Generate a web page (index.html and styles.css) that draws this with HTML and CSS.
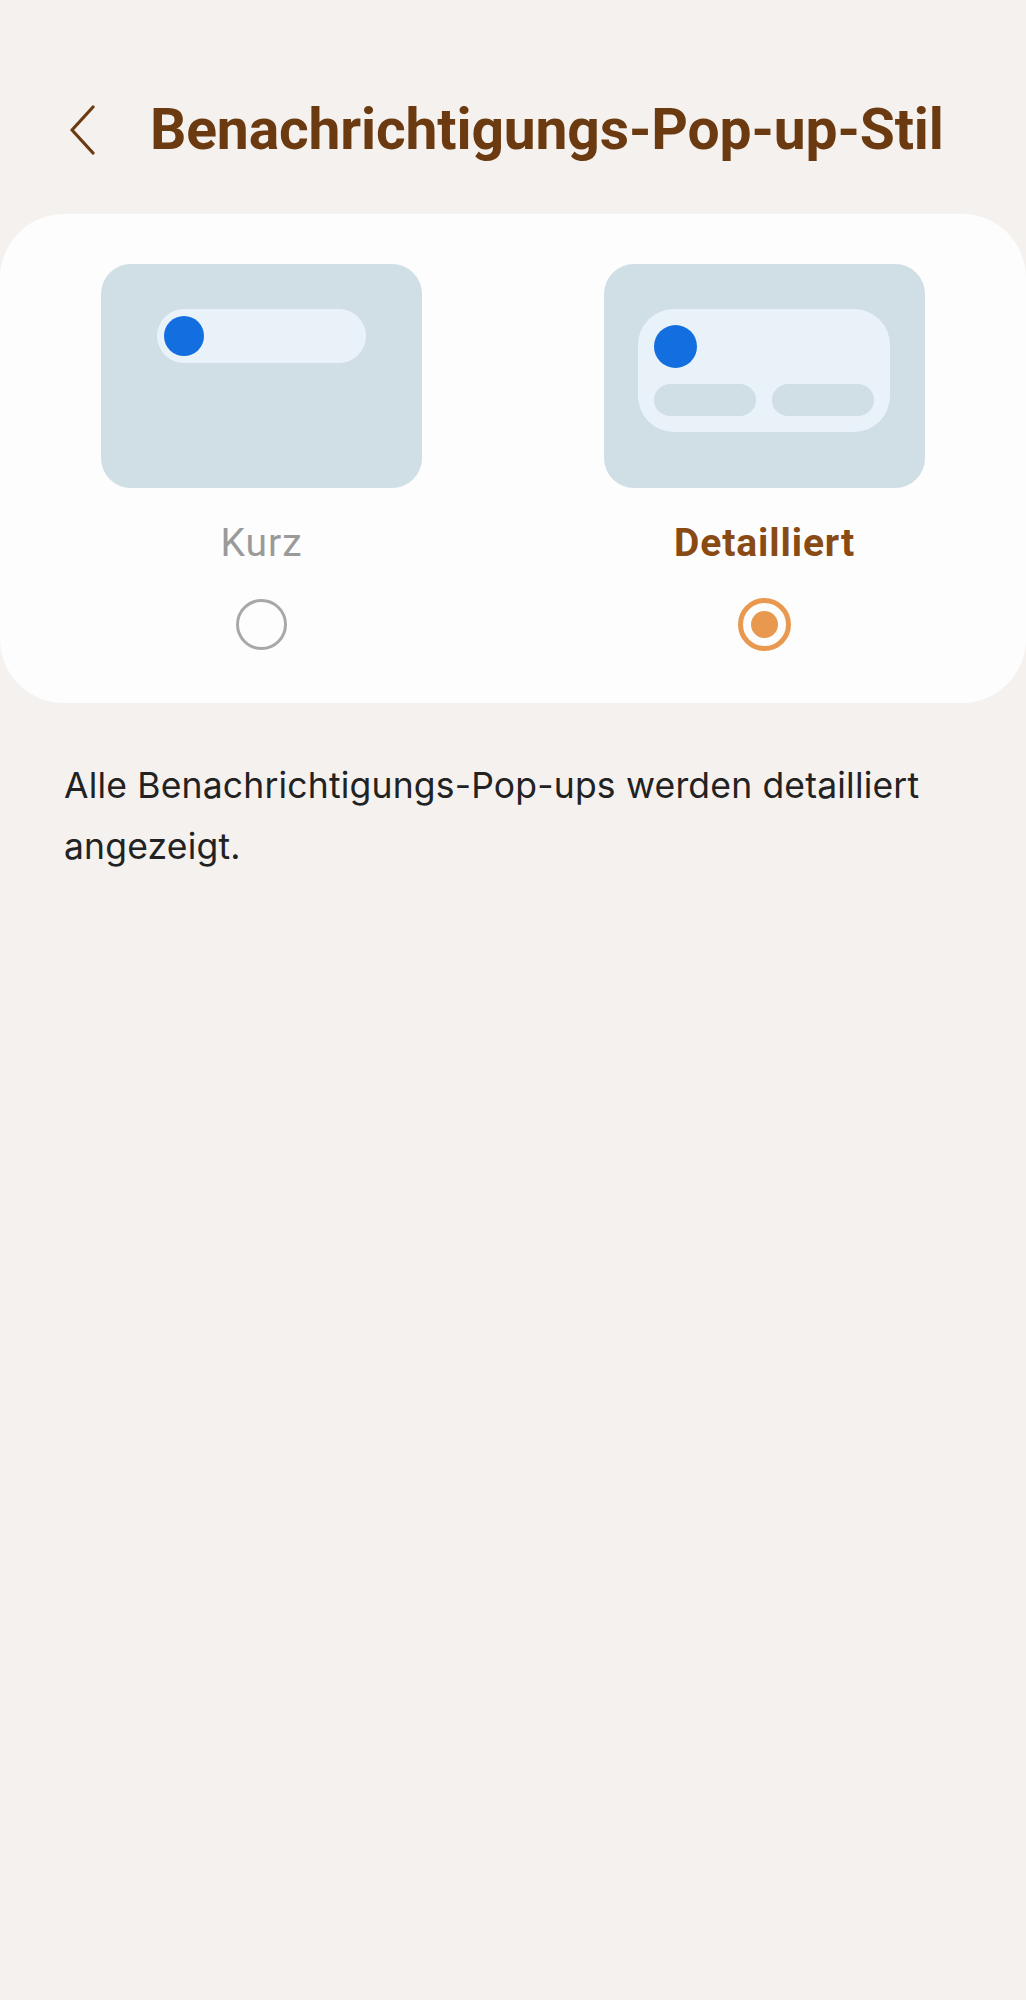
FILE: index.html
```html
<!DOCTYPE html>
<html lang="de">
<head>
<meta charset="utf-8">
<title>Benachrichtigungs-Pop-up-Stil</title>
<link rel="stylesheet" href="styles.css">
</head>
<body>
<header class="header">
  <button class="back" aria-label="Zurück">
    <svg width="28" height="50" viewBox="0 0 28 50"><polyline points="24,2 3,25 24,48" fill="none" stroke="#6b3a10" stroke-width="3.2" stroke-linecap="round" stroke-linejoin="round"/></svg>
  </button>
  <h1 class="title">Benachrichtigungs-Pop-up-Stil</h1>
</header>
<section class="card">
  <div class="option">
    <div class="preview">
      <div class="pill"><span class="dot"></span></div>
    </div>
    <div class="label">Kurz</div>
    <span class="radio"></span>
  </div>
  <div class="option selected">
    <div class="preview">
      <div class="detail">
        <span class="dot big"></span>
        <div class="bars"><span class="bar"></span><span class="bar"></span></div>
      </div>
    </div>
    <div class="label">Detailliert</div>
    <span class="radio on"><span class="inner"></span></span>
  </div>
</section>
<p class="desc">Alle Benachrichtigungs-Pop-ups werden detailliert angezeigt.</p>
</body>
</html>
```

FILE: styles.css
```css
html, body {
  margin: 0;
  padding: 0;
}
body {
  background: #f4f1ee;
  font-family: Roboto, "Noto Sans", sans-serif;
  width: 1026px;
  min-height: 2000px;
}
.header {
  display: flex;
  align-items: center;
  padding: 104px 0 0 69px;
  height: 52px;
}
.back {
  border: 0;
  background: none;
  padding: 0;
  width: 28px;
  height: 50px;
  display: flex;
}
.title {
  margin: 0 0 0 53px;
  font-size: 57px;
  font-weight: 700;
  color: #6b3a10;
  line-height: 52px;
  letter-spacing: -0.15px;
}
.card {
  margin-top: 58px;
  background: #fdfdfd;
  border-radius: 64px;
  height: 489px;
  box-sizing: border-box;
  padding: 50px 10px 0;
  display: grid;
  grid-template-columns: 1fr 1fr;
}
.option {
  display: flex;
  flex-direction: column;
  align-items: center;
}
.preview {
  width: 321px;
  height: 224px;
  background: #d0dee6;
  border-radius: 30px;
  box-sizing: border-box;
  padding: 45px 0 0 56px;
}
.pill {
  width: 209px;
  height: 54px;
  border-radius: 27px;
  background: #eaf2f9;
  display: flex;
  align-items: center;
  padding-left: 7px;
  box-sizing: border-box;
}
.dot {
  width: 40px;
  height: 40px;
  border-radius: 50%;
  background: #136fe0;
  display: block;
}
.dot.big {
  width: 43px;
  height: 43px;
}
.selected .preview {
  padding: 45px 0 0 34px;
}
.detail {
  width: 252px;
  height: 123px;
  background: #eaf2f9;
  border-radius: 36px;
  box-sizing: border-box;
  padding: 16px;
  display: flex;
  flex-direction: column;
  gap: 16px;
}
.bars {
  display: flex;
  gap: 16px;
}
.bar {
  width: 102px;
  height: 32px;
  border-radius: 16px;
  background: #d0dee6;
}
.label {
  margin-top: 32px;
  font-size: 39px;
  line-height: 46px;
  color: #9a9a9a;
  letter-spacing: 1px;
}
.selected .label {
  font-weight: 700;
  color: #8a4a14;
  letter-spacing: 0.9px;
}
.radio {
  margin-top: 33px;
  width: 51px;
  height: 51px;
  box-sizing: border-box;
  border: 3.5px solid #a8a8a8;
  border-radius: 50%;
  display: flex;
  align-items: center;
  justify-content: center;
}
.radio.on {
  width: 53px;
  height: 53px;
  margin-top: 32px;
  border: 5px solid #e8994f;
}
.inner {
  width: 27px;
  height: 27px;
  border-radius: 50%;
  background: #e8994f;
}
.desc {
  margin: 52px 0 0 64px;
  width: 920px;
  font-family: Inter, Roboto, sans-serif;
  font-size: 35.5px;
  line-height: 61px;
  letter-spacing: 0.18px;
  color: #222222;
}
```
